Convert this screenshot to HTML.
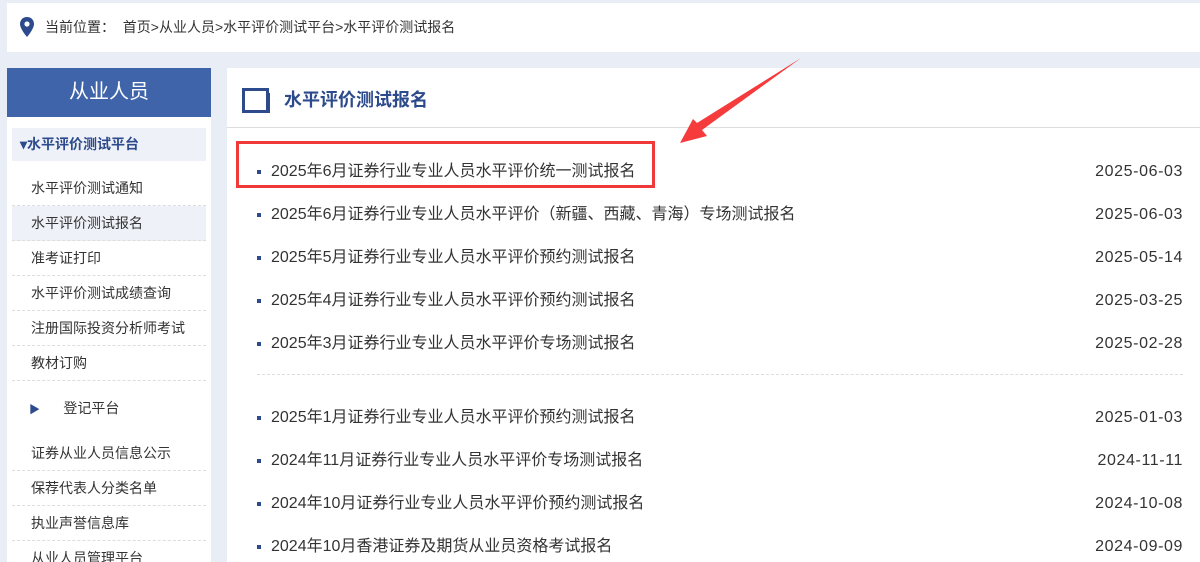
<!DOCTYPE html>
<html style="height:562px;overflow:hidden"><head><meta charset="utf-8"><style>
*{margin:0;padding:0;box-sizing:border-box}
body{width:1200px;height:562px;overflow:hidden;background:#e9edf5;font-family:"Liberation Sans","Noto Sans CJK SC",sans-serif;color:#333;position:relative}
.bc{position:absolute;left:7px;top:3px;width:1193px;height:49px;background:#fff;font-size:14px;line-height:49px;padding-left:38px}
.side{position:absolute;left:7px;top:68px;width:204px;height:494px;background:#fff;overflow:hidden}
.sh{height:49px;background:#4064a9;color:#fff;font-size:20px;text-align:center;line-height:49px}
.sub{margin:11px 5px 0;height:33px;background:#eef1f7;color:#2c4a8c;font-weight:bold;font-size:14px;line-height:33px;padding-left:8px}
.it{margin:0 5px;height:35px;line-height:35px;font-size:14px;padding-left:19px;border-bottom:1px dashed #ddd}
.main{position:absolute;left:227px;top:68px;width:973px;height:494px;background:#fff;overflow:hidden}
.mh{height:60px;border-bottom:1px solid #ddd;position:relative}
.mh span{position:absolute;left:57px;top:18px;font-size:18px;font-weight:bold;color:#2c4a8c}
.row{position:absolute;left:30px;right:17px;font-size:16px;height:20px;line-height:20px}
.row:before{content:"";position:absolute;left:0;top:8px;width:4px;height:4px;background:#2c4a8c}
.row .t{position:absolute;left:14px}
.row .d{position:absolute;right:0;letter-spacing:0.6px}
</style></head><body>
<div class="bc"><svg style="position:absolute;left:13px;top:14px" width="14" height="20" viewBox="0 0 14 20"><path d="M7 0C3 0 0 3 0 7c0 5 7 13 7 13s7-8 7-13c0-4-3-7-7-7z" fill="#2c4a8c"/><circle cx="7" cy="7" r="2.6" fill="#fff"/></svg>当前位置：&nbsp; 首页&gt;从业人员&gt;水平评价测试平台&gt;水平评价测试报名</div>
<div class="side">
<div class="sh">从业人员</div>
<div class="sub">▾水平评价测试平台</div>
<div style="height:10px"></div>
<div class="it">水平评价测试通知</div>
<div class="it" style="background:#eef1f7">水平评价测试报名</div>
<div class="it">准考证打印</div>
<div class="it">水平评价测试成绩查询</div>
<div class="it">注册国际投资分析师考试</div>
<div class="it">教材订购</div>
<div class="it" style="height:55px;line-height:55px;border:none;padding-left:17px"><span style="color:#2c4a8c;font-size:11px">▶</span>&nbsp;&nbsp;&nbsp;&nbsp;&nbsp;&nbsp;登记平台</div>
<div class="it">证券从业人员信息公示</div>
<div class="it">保荐代表人分类名单</div>
<div class="it">执业声誉信息库</div>
<div class="it">从业人员管理平台</div>
</div>
<div class="main">
<div class="mh"><svg style="position:absolute;left:15px;top:20px" width="30" height="26" viewBox="0 0 30 26"><rect x="1.5" y="1.5" width="24" height="22" fill="none" stroke="#2c4a8c" stroke-width="3"/><rect x="26" y="5" width="2" height="20" fill="#2c4a8c"/></svg><span>水平评价测试报名</span></div>
<div class="row" style="top:94px"><span class="t">2025年6月证券行业专业人员水平评价统一测试报名</span><span class="d">2025-06-03</span></div>
<div class="row" style="top:137px"><span class="t">2025年6月证券行业专业人员水平评价（新疆、西藏、青海）专场测试报名</span><span class="d">2025-06-03</span></div>
<div class="row" style="top:180px"><span class="t">2025年5月证券行业专业人员水平评价预约测试报名</span><span class="d">2025-05-14</span></div>
<div class="row" style="top:223px"><span class="t">2025年4月证券行业专业人员水平评价预约测试报名</span><span class="d">2025-03-25</span></div>
<div class="row" style="top:266px"><span class="t">2025年3月证券行业专业人员水平评价专场测试报名</span><span class="d">2025-02-28</span></div>
<div style="position:absolute;left:30px;right:17px;top:306px;border-top:1px dashed #ddd"></div>
<div class="row" style="top:340px"><span class="t">2025年1月证券行业专业人员水平评价预约测试报名</span><span class="d">2025-01-03</span></div>
<div class="row" style="top:383px"><span class="t">2024年11月证券行业专业人员水平评价专场测试报名</span><span class="d">2024-11-11</span></div>
<div class="row" style="top:426px"><span class="t">2024年10月证券行业专业人员水平评价预约测试报名</span><span class="d">2024-10-08</span></div>
<div class="row" style="top:469px"><span class="t">2024年10月香港证券及期货从业员资格考试报名</span><span class="d">2024-09-09</span></div>
</div>
<div style="position:absolute;left:236px;top:141px;width:419px;height:47px;border:3px solid #f03a3a"></div>
<svg style="position:absolute;left:0;top:0" width="1200" height="562"><path d="M801 58 L702 130 L707 136 L680 143 L693 119 L697 123 Z" fill="#f53b3b"/></svg>
</body></html>
